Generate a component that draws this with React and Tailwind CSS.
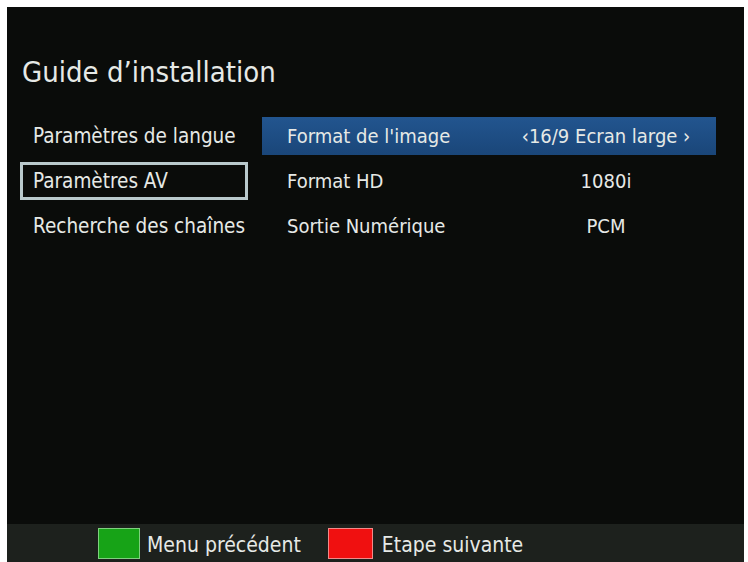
import React from "react";

const font = { fontFamily: '"Liberation Sans Narrow", "DejaVu Sans Condensed", "Liberation Sans", sans-serif' };

const menu = [
  { label: "Paramètres de langue" },
  { label: "Paramètres AV", active: true },
  { label: "Recherche des chaînes" },
];

const settings = [
  { label: "Format de l'image", value: "‹16/9 Ecran large ›", selected: true },
  { label: "Format HD", value: "1080i" },
  { label: "Sortie Numérique", value: "PCM" },
];

export default function App() {
  return (
    <div className="w-[748px] h-[562px] bg-white pt-[7px] pl-[7px] pr-[4px] overflow-hidden" style={font}>
      <div className="h-full bg-[#0a0c0a] flex flex-col text-[#e6e9e6]">
        {/* Title */}
        <div className="pl-[15px] pt-[47px] h-[110px]">
          <h1 className="text-[29px] leading-[36px] whitespace-nowrap">Guide d’installation</h1>
        </div>

        {/* Body */}
        <div className="flex flex-1 pl-[13px]">
          <div className="w-[228px] flex flex-col gap-[7px]">
            {menu.map((m) => (
              <div
                key={m.label}
                className={
                  "h-[38px] flex items-center pl-[10px] text-[20.5px] whitespace-nowrap " +
                  (m.active ? "border-[3px] border-[#b9c9cc]" : "border-[3px] border-transparent")
                }
              >
                {m.label}
              </div>
            ))}
          </div>

          <div className="ml-[14px] w-[454px] flex flex-col gap-[7px]">
            {settings.map((s) => (
              <div
                key={s.label}
                className={
                  "h-[38px] flex items-center text-[20px] whitespace-nowrap " +
                  (s.selected ? "bg-gradient-to-b from-[#22558f] to-[#1a4679]" : "")
                }
              >
                <span className="w-[238px] pl-[25px]">{s.label}</span>
                <span className="w-[212px] text-center">{s.value}</span>
              </div>
            ))}
          </div>
        </div>

        {/* Footer */}
        <div className="h-[38px] bg-[#1d211d] flex items-center pl-[91px] text-[21px] whitespace-nowrap">
          <span className="w-[42px] h-[31px] bg-[#17a317] border border-[#7fd07f] mr-[7px]" />
          <span className="pt-[5px]">Menu précédent</span>
          <span className="w-[45px] h-[31px] bg-[#f01010] border border-[#f08a8a] ml-[27px] mr-[9px]" />
          <span className="pt-[5px]">Etape suivante</span>
        </div>
      </div>
    </div>
  );
}
